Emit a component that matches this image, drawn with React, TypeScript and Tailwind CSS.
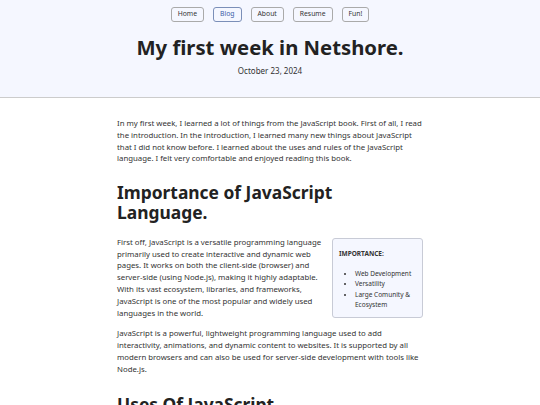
import React from 'react';

const links = ['Home', 'Blog', 'About', 'Resume', 'Fun!'];

const App = () => {
    return (
        <div className="min-h-screen bg-white text-[#333] font-['Noto_Sans',sans-serif]">
            {/* Header */}
            <header className="bg-[#f5f7ff] border-b border-[#ccc] h-[98px] pt-[7px] text-center">
                <nav className="flex justify-center gap-[9px]">
                    {links.map((l) => (
                        <a
                            key={l}
                            className={`h-[15px] px-[6px] flex items-center text-[6.8px] rounded-[3px] border ${
                                l === 'Blog' ? 'border-[#7b8fb8] text-[#3b5ea8]' : 'border-[#aaa] text-[#333]'
                            }`}
                        >
                            {l}
                        </a>
                    ))}
                </nav>
                <h1 className="mt-[12px] text-[20.3px] font-bold leading-[26px] text-[#222]">My first week in Netshore.</h1>
                <p className="mt-[5px] text-[8px] text-[#333]">October 23, 2024</p>
            </header>

            <main className="w-[306px] mx-auto pt-[20px] text-[7.8px] leading-[11.8px]">
                <p>
                    In my first week, I learned a lot of things from the JavaScript book. First of all, I read the
                    introduction. In the introduction, I learned many new things about JavaScript that I did not know
                    before. I learned about the uses and rules of the JavaScript language. I felt very comfortable and
                    enjoyed reading this book.
                </p>

                <h2 className="mt-[17px] text-[17.4px] font-bold leading-[20.3px] text-[#222]">
                    Importance of JavaScript Language.
                </h2>

                <div className="mt-[14px]">
                    <aside className="float-right ml-[10px] mt-[1px] w-[91px] bg-[#f5f7ff] border border-[#c8cbd6] rounded-[3px] px-[6px] pt-[10px] pb-[7px] text-[6.5px] leading-[10.3px]">
                        <p className="font-bold">IMPORTANCE:</p>
                        <ul className="mt-[10px] list-disc pl-[16px]">
                            <li>Web Development</li>
                            <li>Versatility</li>
                            <li>Large Comunity &amp; Ecosystem</li>
                        </ul>
                    </aside>
                    <p>
                        First off, JavaScript is a versatile programming language primarily used to create interactive
                        and dynamic web pages. It works on both the client-side (browser) and server-side (using
                        Node.js), making it highly adaptable. With its vast ecosystem, libraries, and frameworks,
                        JavaScript is one of the most popular and widely used languages in the world.
                    </p>
                    <p className="mt-[9px]">
                        JavaScript is a powerful, lightweight programming language used to add interactivity,
                        animations, and dynamic content to websites. It is supported by all modern browsers and can
                        also be used for server-side development with tools like Node.js.
                    </p>
                </div>

                <h2 className="mt-[18px] text-[17.4px] font-bold leading-[20.3px] text-[#222]">Uses Of JavaScript</h2>
            </main>
        </div>
    );
};

export default App;
